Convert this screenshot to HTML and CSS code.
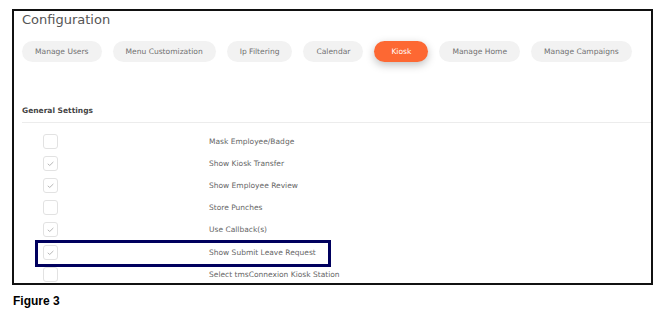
FILE: index.html
```html
<!DOCTYPE html>
<html lang="en">
<head>
    <meta charset="UTF-8">
    <title>Configuration - Kiosk</title>
    <link rel="stylesheet" href="styles.css">
</head>
<body>

    <div class="panel">
        <h1>Configuration</h1>

        <div class="tabs">
            <span class="tab">Manage Users</span>
            <span class="tab">Menu Customization</span>
            <span class="tab">Ip Filtering</span>
            <span class="tab">Calendar</span>
            <span class="tab active">Kiosk</span>
            <span class="tab">Manage Home</span>
            <span class="tab">Manage Campaigns</span>
        </div>

        <div class="section-title">General Settings</div>

        <div class="settings">
            <div class="row">
                <span class="check"></span>
                <span class="label">Mask Employee/Badge</span>
            </div>
            <div class="row">
                <span class="check checked"><svg viewBox="0 0 10 10"><path d="M2.5 5.3 L4.3 6.8 L7.6 3.6"/></svg></span>
                <span class="label">Show Kiosk Transfer</span>
            </div>
            <div class="row">
                <span class="check checked"><svg viewBox="0 0 10 10"><path d="M2.5 5.3 L4.3 6.8 L7.6 3.6"/></svg></span>
                <span class="label">Show Employee Review</span>
            </div>
            <div class="row">
                <span class="check"></span>
                <span class="label">Store Punches</span>
            </div>
            <div class="row">
                <span class="check checked"><svg viewBox="0 0 10 10"><path d="M2.5 5.3 L4.3 6.8 L7.6 3.6"/></svg></span>
                <span class="label">Use Callback(s)</span>
            </div>
            <div class="row marked">
                <span class="check checked"><svg viewBox="0 0 10 10"><path d="M2.5 5.3 L4.3 6.8 L7.6 3.6"/></svg></span>
                <span class="label">Show Submit Leave Request</span>
                <span class="callout"></span>
            </div>
            <div class="row">
                <span class="check"></span>
                <span class="label">Select tmsConnexion Kiosk Station</span>
            </div>
        </div>
    </div>

    <p class="caption">Figure 3</p>

</body>
</html>
```

FILE: styles.css
```css
body {
    margin: 0;
    background-color: #fff;
    font-family: 'DejaVu Sans', sans-serif;
}

.panel {
    margin: 9px 0 0 12px;
    width: 629px;
    height: 272px;
    border: 2px solid #111;
    padding-left: 8px;
    overflow: hidden;
}

h1 {
    margin: 0;
    font-size: 13px;
    font-weight: normal;
    line-height: 18px;
    color: #555;
}

.tabs {
    display: flex;
    gap: 11px;
    margin-top: 12px;
}

.tab {
    height: 21px;
    line-height: 21px;
    padding: 0 13px;
    border-radius: 11px;
    background-color: #f2f2f2;
    font-size: 7.55px;
    color: #707070;
    white-space: nowrap;
}

.tab.active {
    padding: 0 17px;
    background-color: #fd6833;
    color: #fff;
    box-shadow: 0 3px 8px rgba(0, 0, 0, 0.25);
}

.section-title {
    margin-top: 43px;
    padding-bottom: 5px;
    border-bottom: 1px solid #ececec;
    font-size: 7.5px;
    font-weight: bold;
    line-height: 12px;
    color: #444;
}

.settings {
    margin-top: 7px;
}

.row {
    position: relative;
    display: flex;
    align-items: center;
    height: 22.2px;
    padding-left: 21px;
}

.check {
    width: 13px;
    height: 13px;
    border: 1px solid #e2e2e2;
    border-radius: 3px;
    display: flex;
    align-items: center;
    justify-content: center;
}

.check svg {
    width: 11px;
    height: 11px;
    fill: none;
    stroke: #b5b5b5;
    stroke-width: 0.9;
}

.label {
    margin-left: 151px;
    font-size: 7.5px;
    color: #666;
}

.callout {
    position: absolute;
    left: 13px;
    top: -1px;
    width: 290px;
    height: 21px;
    border: 3px solid #00005e;
}

.caption {
    margin: 9px 0 0 13px;
    font-family: 'Liberation Sans', Arial, sans-serif;
    font-size: 12px;
    font-weight: bold;
    color: #000;
}
```
